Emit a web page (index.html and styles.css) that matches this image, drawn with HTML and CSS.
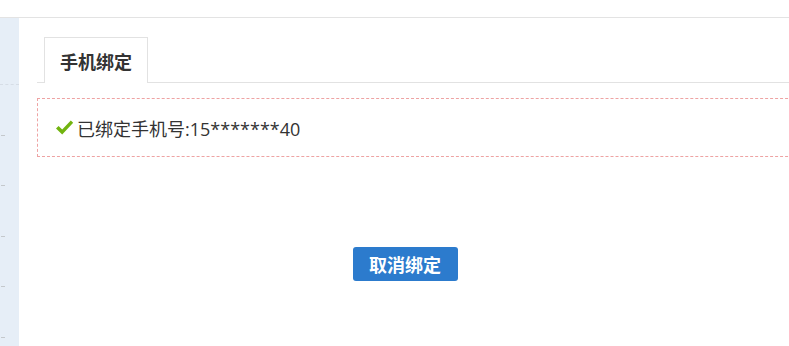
FILE: index.html
```html
<!DOCTYPE html>
<html lang="zh-CN">
<head>
<meta charset="utf-8">
<title>手机绑定</title>
<link rel="stylesheet" href="styles.css">
</head>
<body>
<div class="topbar"></div>
<div class="main">
  <aside class="sidebar">
    <div class="side-line"></div>
    <div class="side-mark"></div>
    <div class="side-mark"></div>
    <div class="side-mark"></div>
    <div class="side-mark"></div>
    <div class="side-mark"></div>
  </aside>
  <section class="content">
    <div class="tabs">
      <div class="tab">手机绑定</div>
    </div>
    <div class="panel">
      <svg class="check" width="19" height="17" viewBox="0 0 19 17"><path d="M1 9.5 L3.6 7 L7.2 10.6 L15.8 1.5 L18.2 3.8 L7.2 15.6 Z" fill="#72b410"/></svg>
      <span class="status">已绑定手机号:15*******40</span>
    </div>
    <div class="actions">
      <button class="btn">取消绑定</button>
    </div>
  </section>
</div>
</body>
</html>
```

FILE: styles.css
```css
html, body {
  margin: 0;
  padding: 0;
  background: #fff;
  font-family: "Open Sans", "Noto Sans CJK SC", sans-serif;
  color: #333;
  overflow: hidden;
}
.topbar {
  height: 17px;
  border-bottom: 1px solid #e3e3e3;
}
.main {
  display: flex;
  height: 328px;
}
.sidebar {
  width: 19px;
  flex: none;
  background: #e6eef7;
  display: flex;
  flex-direction: column;
}
.side-line {
  margin-top: 66px;
  height: 0;
  border-top: 1px dashed #d6dde6;
}
.side-mark {
  margin-top: 49.5px;
  margin-left: 1px;
  width: 4px;
  height: 1px;
  background: #c4c8cc;
}
.content {
  flex: 1;
  min-width: 0;
  padding: 19px 16px 0 18px;
}
.tabs {
  display: flex;
  border-bottom: 1px solid #e2e2e2;
  margin-right: -40px;
  padding-left: 7px;
}
.tab {
  width: 102px;
  height: 45px;
  border: 1px solid #e2e2e2;
  border-bottom: none;
  margin-bottom: -1px;
  background: #fff;
  display: flex;
  align-items: center;
  justify-content: center;
  font-size: 18px;
  font-weight: bold;
  color: #333;
}
.panel {
  margin-top: 15px;
  margin-right: -40px;
  height: 57px;
  border: 1px dashed #eea3a3;
  display: flex;
  align-items: center;
  padding-left: 17px;
  gap: 3px;
}
.check {
  display: block;
}
.status {
  font-size: 18px;
  color: #333;
}
.actions {
  display: flex;
  justify-content: center;
  margin-top: 90px;
}
.btn {
  width: 105px;
  height: 34px;
  border: none;
  border-radius: 3px;
  background: #2c7bcd;
  color: #fff;
  font-family: "Open Sans", "Noto Sans CJK SC", sans-serif;
  font-size: 18px;
  font-weight: bold;
  padding: 0;
}
```
